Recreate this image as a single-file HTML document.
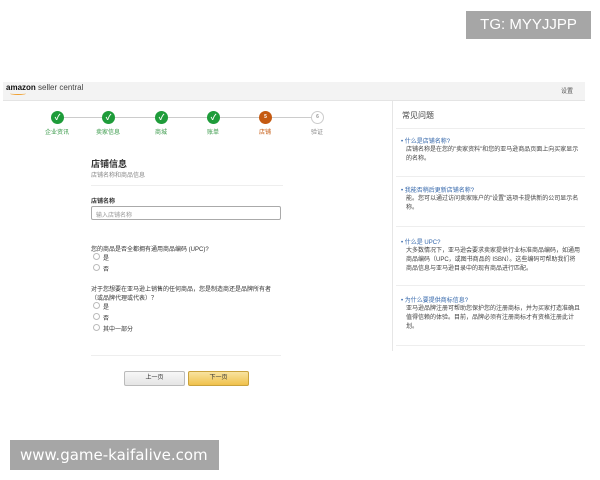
<!DOCTYPE html>
<html><head><meta charset="utf-8"><style>
*{margin:0;padding:0;box-sizing:border-box}
body{width:600px;height:480px;background:#fff;position:relative;overflow:hidden;font-family:"Liberation Sans","Noto Sans CJK SC",sans-serif;color:#333}
.a{position:absolute}
.t{font-size:6px;white-space:nowrap}
.c{width:13px;height:13px;border-radius:50%;background:#1e9c3a;color:#fff;font-size:8px;line-height:13px;text-align:center;font-weight:bold}
.lab{font-size:6px;color:#3a9a4a;width:40px;text-align:center}
.r{width:7px;height:7px;border:1px solid #bbb;border-radius:50%}
.faq{color:#3366aa;font-size:6px}
.fa{font-size:6px;color:#444;line-height:9px;width:175px}
</style></head><body>
<div class="a" style="left:466px;top:11px;width:125px;height:28px;background:#a6a6a6;color:#fff;font-size:15px;line-height:28px;text-align:center">TG: MYYJJPP</div>
<div class="a" style="left:3px;top:82px;width:582px;height:19px;background:#f3f3f3;border-bottom:1px solid #e4e4e4"></div>
<div class="a" style="left:6px;top:83px;font-size:8px"><b style="color:#111">amazon</b> <span style="color:#444">seller central</span></div>
<div class="a" style="left:10px;top:92px;width:16px;height:3px;border-bottom:1px solid #f0a030;border-radius:0 0 50% 50%"></div>
<div class="a t" style="left:561px;top:86px;color:#555">设置</div>
<div class="a" style="left:392px;top:101px;width:1px;height:250px;background:#e6e6e6"></div>
<div class="a" style="left:56px;top:117px;width:260px;height:1px;background:#ccc"></div>
<div class="a c" style="left:51px;top:111px">✓</div>
<div class="a c" style="left:102px;top:111px">✓</div>
<div class="a c" style="left:155px;top:111px">✓</div>
<div class="a c" style="left:207px;top:111px">✓</div>
<div class="a c" style="left:259px;top:111px;background:#c55a11;font-size:5px">5</div>
<div class="a c" style="left:311px;top:111px;background:#fff;border:1px solid #ccc;color:#999;font-size:5px;line-height:11px">6</div>
<div class="a lab" style="left:37px;top:127px">企业资讯</div>
<div class="a lab" style="left:88px;top:127px">卖家信息</div>
<div class="a lab" style="left:141px;top:127px">商城</div>
<div class="a lab" style="left:193px;top:127px">账单</div>
<div class="a lab" style="left:245px;top:127px;color:#c55a11">店铺</div>
<div class="a lab" style="left:297px;top:127px;color:#888">验证</div>
<div class="a" style="left:91px;top:157px;font-size:9px;font-weight:bold">店铺信息</div>
<div class="a t" style="left:91px;top:170px;color:#888">店铺名称和商品信息</div>
<div class="a" style="left:91px;top:185px;width:192px;height:1px;background:#eee"></div>
<div class="a t" style="left:91px;top:196px;font-weight:bold">店铺名称</div>
<div class="a" style="left:91px;top:206px;width:190px;height:14px;border:1px solid #aaa;border-radius:2px;font-size:6px;color:#999;padding:3px 4px">输入店铺名称</div>
<div class="a t" style="left:91px;top:244px">您的商品是否全都拥有通用商品编码 (UPC)?</div>
<div class="a r" style="left:93px;top:253px"></div><div class="a t" style="left:103px;top:253px">是</div>
<div class="a r" style="left:93px;top:264px"></div><div class="a t" style="left:103px;top:264px">否</div>
<div class="a t" style="left:91px;top:284px">对于您想要在亚马逊上销售的任何商品，您是制造商还是品牌所有者</div>
<div class="a t" style="left:91px;top:293px">（或品牌代理或代表）？</div>
<div class="a r" style="left:93px;top:302px"></div><div class="a t" style="left:103px;top:302px">是</div>
<div class="a r" style="left:93px;top:313px"></div><div class="a t" style="left:103px;top:313px">否</div>
<div class="a r" style="left:93px;top:324px"></div><div class="a t" style="left:103px;top:324px">其中一部分</div>
<div class="a" style="left:91px;top:355px;width:190px;height:1px;background:#eee"></div>
<div class="a t" style="left:124px;top:371px;width:61px;height:15px;border:1px solid #bbb;border-radius:2px;background:linear-gradient(#f7f7f7,#e5e5e5);text-align:center;line-height:13px">上一页</div>
<div class="a t" style="left:188px;top:371px;width:61px;height:15px;border:1px solid #c9a23c;border-radius:2px;background:linear-gradient(#f8e3a0,#f0c14b);text-align:center;line-height:13px">下一页</div>
<div class="a" style="left:402px;top:110px;font-size:8px;color:#444">常见问题</div>
<div class="a" style="left:396px;top:128px;width:189px;height:1px;background:#eee"></div>
<div class="a faq" style="left:401px;top:136px">• 什么是店铺名称?</div>
<div class="a fa" style="left:406px;top:146px">店铺名称是在您的"卖家资料"和您的亚马逊商品页面上向买家显示的名称。</div>
<div class="a" style="left:396px;top:176px;width:189px;height:1px;background:#eee"></div>
<div class="a faq" style="left:401px;top:185px">• 我能否稍后更新店铺名称?</div>
<div class="a fa" style="left:406px;top:195px">能。您可以通过访问卖家账户的"设置"选项卡提供新的公司显示名称。</div>
<div class="a" style="left:396px;top:226px;width:189px;height:1px;background:#eee"></div>
<div class="a faq" style="left:401px;top:237px">• 什么是 UPC?</div>
<div class="a fa" style="left:406px;top:247px">大多数情况下，亚马逊会要求卖家提供行业标准商品编码，如通用商品编码（UPC，或图书商品的 ISBN）。这些编码可帮助我们将商品信息与亚马逊目录中的现有商品进行匹配。</div>
<div class="a" style="left:396px;top:285px;width:189px;height:1px;background:#eee"></div>
<div class="a faq" style="left:401px;top:295px">• 为什么要提供商标信息?</div>
<div class="a fa" style="left:406px;top:305px">亚马逊品牌注册可帮助您保护您的注册商标，并为买家打造准确且值得信赖的体验。目前，品牌必须有注册商标才有资格注册此计划。</div>
<div class="a" style="left:396px;top:345px;width:189px;height:1px;background:#eee"></div>
<div class="a" style="left:10px;top:440px;width:209px;height:30px;background:#a6a6a6;color:#fff;font-size:15px;line-height:30px;padding-left:10px;font-family:'DejaVu Sans',sans-serif">www.game-kaifalive.com</div>
</body></html>
